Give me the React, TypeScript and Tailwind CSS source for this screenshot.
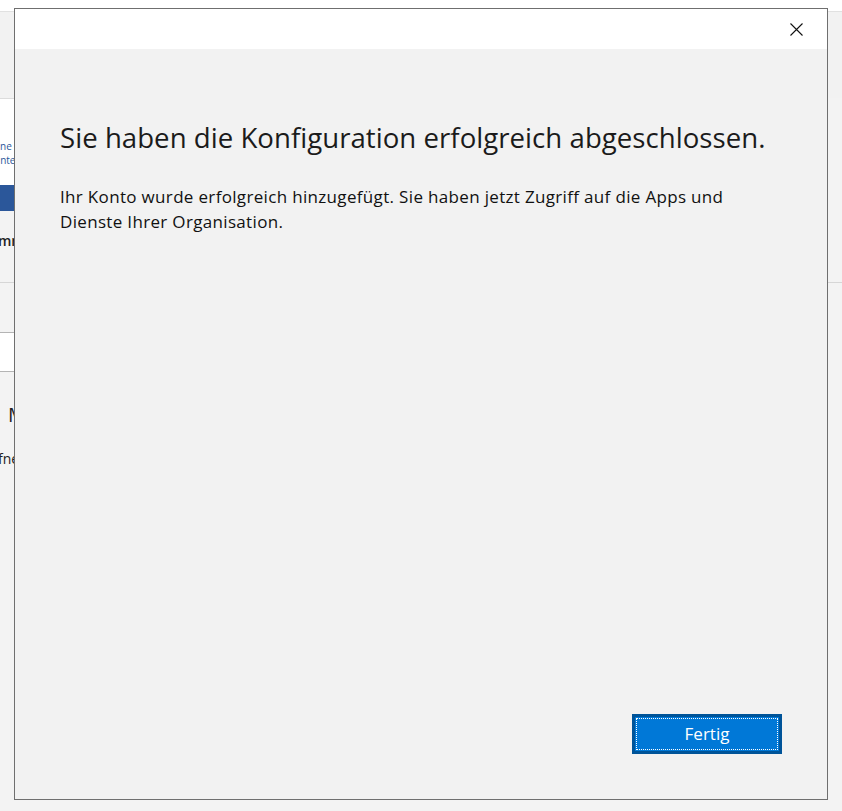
import React from "react";

const font = { fontFamily: '"Open Sans", "Noto Sans", Arial, sans-serif' };

const Backdrop = () => {
  return (
    <div className="flex flex-col h-full w-full">
      <div className="h-[12px] bg-white border-b border-[#e1e1e1]" />
      <div className="h-[86px] bg-[#f2f2f2]" />
      <div className="w-[300px] h-[87px] bg-white border-t border-[#dcdcdc] flex flex-col pt-[40px] text-[10px] leading-[14px] text-[#2b579a]">
        <span className="ml-[-8px]">Eine</span>
        <span className="ml-[-6px]">unten</span>
      </div>
      <div className="w-[300px] h-[26px] bg-[#2b579a]" />
      <div className="w-[300px] h-[71px] flex items-center text-[14px] font-semibold text-[#222] pb-[12px]">
        <span className="ml-[-2px]">mmen</span>
      </div>
      <div className="h-[50px] border-t border-[#d6d6d6]" />
      <div className="w-[300px] h-[40px] bg-white border-y border-[#b4b4b4]" />
      <div className="w-[300px] h-[58px] flex items-end pl-[8px] text-[20px] text-[#222]">
        <span>M</span>
      </div>
      <div className="w-[300px] h-[60px] flex items-center text-[14px] text-[#222] pb-[4px]">
        <span className="ml-[-2px]">fnen</span>
      </div>
    </div>
  );
};

const CloseIcon = () => (
  <svg width="13" height="13" viewBox="0 0 13 13" fill="none">
    <path d="M0.5 0.5L12.5 12.5M12.5 0.5L0.5 12.5" stroke="#111" strokeWidth="1.1" />
  </svg>
);

const App = () => {
  return (
    <div className="relative w-full h-[811px] bg-[#f3f3f3] overflow-hidden" style={font}>
      <Backdrop />
      <div className="absolute left-[14px] top-[8px] w-[814px] h-[792px] border border-[#6f6f6f] bg-[#f2f2f2] flex flex-col">
        <div className="h-[40px] bg-white flex justify-end items-center pr-[24px]">
          <CloseIcon />
        </div>
        <div className="flex-1 flex flex-col pl-[45px] pr-[20px]">
          <h1 className="mt-[68px] text-[27.6px] leading-[40px] text-[#1b1b1b] tracking-[0.03px] whitespace-nowrap">
            Sie haben die Konfiguration erfolgreich abgeschlossen.
          </h1>
          <p className="mt-[27px] text-[17px] leading-[25px] text-[#111] tracking-[0.33px] w-[700px]">
            Ihr Konto wurde erfolgreich hinzugefügt. Sie haben jetzt Zugriff auf die Apps und Dienste Ihrer Organisation.
          </p>
          <div className="flex-1" />
          <div className="flex justify-end pr-[25px] mb-[45px]">
            <button className="w-[150px] h-[40px] bg-[#0078d7] border-[3px] border-[#005499] p-[1px]">
              <div className="w-full h-full border border-dotted border-white flex items-center justify-center text-white text-[17px]">
                Fertig
              </div>
            </button>
          </div>
        </div>
      </div>
    </div>
  );
};

export default App;
